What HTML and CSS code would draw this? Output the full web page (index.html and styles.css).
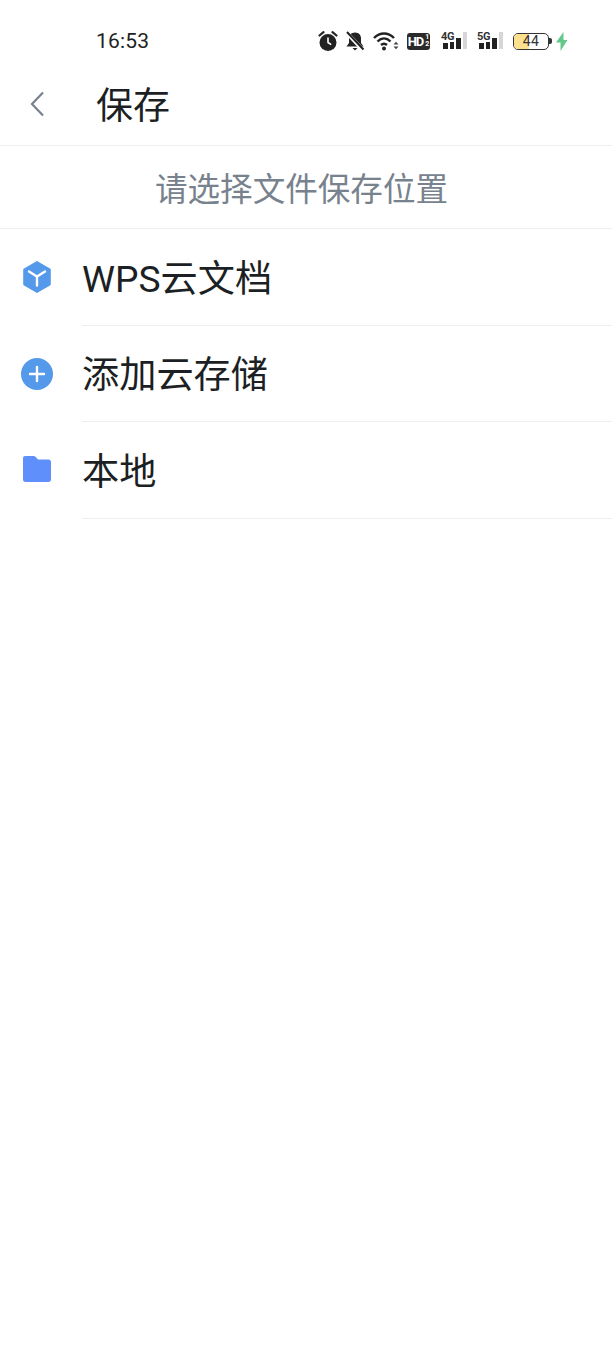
FILE: index.html
```html
<!DOCTYPE html>
<html lang="zh">
<head>
  <meta charset="UTF-8">
  <title>保存</title>
  <link rel="stylesheet" href="styles.css">
</head>
<body>
  <div class="status-bar">
    <span class="clock">16:53</span>
    <div class="status-icons">
      <svg class="ico" width="20" height="22" viewBox="0 0 20 22">
        <circle cx="10" cy="12.500" r="8.500" fill="#222"/>
        <path d="M10 7.500V12.500l3.200 2.200" fill="none" stroke="#fff" stroke-width="1.600"/>
        <path d="M1.500 5.500L5.500 2.200M18.500 5.500L14.500 2.200" stroke="#222" stroke-width="2.200" stroke-linecap="round"/>
      </svg>
      <svg class="ico" width="20" height="22" viewBox="0 0 20 22">
        <path d="M10 2.500c-4 0-6 2.800-6 6V13l-2.500 3.500h17L16 13V8.500c0-3.200-2-6-6-6z" fill="#222"/>
        <path d="M7.500 18h5L10 20.500z" fill="#222"/>
        <path d="M1.500 2.500L18 20" stroke="#fff" stroke-width="4"/>
        <path d="M2 2L18.500 19.500" stroke="#222" stroke-width="2"/>
      </svg>
      <svg class="ico" width="26" height="22" viewBox="0 0 26 22">
        <path d="M1 8C7 2 15 2 21 8M4.500 11.500C8.500 7.500 13.500 7.500 17.500 11.500M8 15C10 13.200 12 13.200 14 15" fill="none" stroke="#222" stroke-width="2.400"/>
        <circle cx="11" cy="18.500" r="2" fill="#222"/>
        <path d="M20.500 14.500l2.500-2.800 2.500 2.800zM20.500 16.500l2.500 2.800 2.500-2.800z" fill="#444"/>
      </svg>
      <div class="hd-badge">HD<span class="hd-sub">1<br>2</span></div>
      <div class="signal">
        <span class="net">4G</span>
        <i class="bar b1"></i><i class="bar b2"></i><i class="bar b3"></i><i class="bar b4"></i>
      </div>
      <div class="signal">
        <span class="net">5G</span>
        <i class="bar b1"></i><i class="bar b2"></i><i class="bar b3"></i><i class="bar b4"></i>
      </div>
      <div class="battery">
        <div class="battery-body">
          <div class="battery-fill"></div>
          <span class="battery-num">44</span>
        </div>
        <div class="battery-cap"></div>
      </div>
      <svg class="bolt" width="13" height="22" viewBox="0 0 13 22">
        <path d="M8.500 2L1 12.500h4.500V21L12.500 10H8.500z" fill="#63c98b"/>
      </svg>
    </div>
  </div>

  <header class="title-bar">
    <svg class="back" width="16" height="28" viewBox="0 0 16 28">
      <path d="M14 2.500L3 14l11 11.500" fill="none" stroke="#78828e" stroke-width="2.200"/>
    </svg>
    <h1 class="title">保存</h1>
  </header>

  <div class="hint">请选择文件保存位置</div>

  <ul class="list">
    <li class="row">
      <svg class="row-icon" width="32" height="34" viewBox="0 0 32 34">
        <path d="M16 1l13 7.500a1.500 1.500 0 0 1 .8 1.300v14.400a1.500 1.500 0 0 1-.8 1.300L16 33 3 25.500a1.500 1.500 0 0 1-.8-1.300V9.800A1.500 1.500 0 0 1 3 8.500z" fill="#5599ea"/>
        <path d="M8 11.500L16 16.500l8-5M16 16.500V25.500" fill="none" stroke="#fff" stroke-width="2.400" stroke-linecap="round"/>
      </svg>
      <span class="row-text">WPS云文档</span>
    </li>
    <li class="row">
      <svg class="row-icon" width="32" height="34" viewBox="0 0 32 34">
        <circle cx="16" cy="17" r="16" fill="#5599ea"/>
        <path d="M9 17h14M16 10v14" stroke="#fff" stroke-width="2.400" stroke-linecap="round"/>
      </svg>
      <span class="row-text">添加云存储</span>
    </li>
    <li class="row">
      <svg class="row-icon folder-icon" width="32" height="34" viewBox="0 0 32 34">
        <path d="M4 4h8.500c1 0 1.500.4 2.200 1.100L17 7.500h10.500C29 7.500 30 8.500 30 10v17.500c0 1.500-1 2.500-2.500 2.500h-23C3 30 2 29 2 27.500V6C2 4.800 3 4 4 4z" fill="#5f8ffb"/>
      </svg>
      <span class="row-text">本地</span>
    </li>
  </ul>
</body>
</html>
```

FILE: styles.css
```css
html, body {
  margin: 0;
  padding: 0;
  height: 100%;
  background: #fff;
  overflow: hidden;
  font-family: "Roboto", "Noto Sans CJK SC", sans-serif;
  color: #1c1f23;
}
.status-bar {
  height: 64px;
  padding: 18px 44px 0 96px;
  box-sizing: border-box;
  display: flex;
  justify-content: space-between;
  align-items: center;
}
.clock {
  font-size: 21px;
  letter-spacing: 0.2px;
  color: #222;
}
.status-icons {
  display: flex;
  align-items: center;
  gap: 8px;
}
.ico {
  display: block;
}
.ico:first-child {
  margin-right: -1px;
}
.hd-badge {
  width: 23px;
  height: 17px;
  margin-right: 3px;
  background: #2a2a2a;
  border-radius: 3px;
  color: #fff;
  font-size: 13px;
  font-weight: 700;
  letter-spacing: -1px;
  display: flex;
  align-items: center;
  justify-content: center;
}
.hd-sub {
  font-size: 7px;
  line-height: 7px;
  letter-spacing: 0;
  margin-left: 2px;
}
.signal {
  position: relative;
  width: 26px;
  height: 18px;
  margin: 0 2px 2px 0;
  display: flex;
  align-items: flex-end;
  justify-content: flex-end;
  gap: 2px;
}
.net {
  position: absolute;
  left: 0;
  top: 0;
  font-size: 11px;
  line-height: 11px;
  letter-spacing: -0.4px;
  font-weight: 700;
  color: #333;
}
.bar {
  display: block;
  width: 4.500px;
  background: #222;
}
.b1 { height: 6px; }
.b2 { height: 7px; }
.b3 { height: 11px; }
.b4 { height: 17px; background: #d6d6d6; }
.battery {
  display: flex;
  align-items: center;
  gap: 0;
}
.battery-body {
  position: relative;
  width: 36px;
  height: 17px;
  border: 1.5px solid #333;
  border-radius: 5px;
  box-sizing: border-box;
  overflow: hidden;
}
.battery-fill {
  width: 15px;
  height: 100%;
  background: #fde08e;
}
.battery-num {
  position: absolute;
  top: 0;
  left: 0;
  right: 0;
  text-align: center;
  font-size: 14px;
  line-height: 14px;
  letter-spacing: 0.5px;
  color: #333;
}
.battery-cap {
  width: 3px;
  height: 6px;
  background: #333;
  border-radius: 0 2px 2px 0;
}
.bolt {
  margin-left: -5px;
}
.title-bar {
  height: 82px;
  display: flex;
  align-items: center;
  padding: 0 0 0 29px;
  border-bottom: 1px solid #eceeef;
  box-sizing: border-box;
}
.back {
  display: block;
  margin-top: -2px;
}
.title {
  margin: 4px 0 0 51px;
  font-size: 37px;
  font-weight: 400;
  line-height: 46px;
}
.hint {
  height: 83px;
  display: flex;
  align-items: center;
  justify-content: center;
  padding: 0 9px 2px 0;
  font-size: 32.6px;
  color: #78828e;
  border-bottom: 1px solid #eceeef;
  box-sizing: border-box;
}
.list {
  list-style: none;
  margin: 0;
  padding: 0;
}
.row {
  height: 96.5px;
  display: flex;
  align-items: center;
  padding-left: 21px;
  position: relative;
}
.row::after {
  content: "";
  position: absolute;
  left: 82px;
  right: 0;
  bottom: 0;
  height: 1px;
  background: #eceeef;
}
.row-icon {
  display: block;
  flex: none;
}
.folder-icon {
  margin-top: -3px;
}
.row-text {
  margin: 3px 0 0 29px;
  font-size: 37.200px;
  line-height: 46px;
}
```
